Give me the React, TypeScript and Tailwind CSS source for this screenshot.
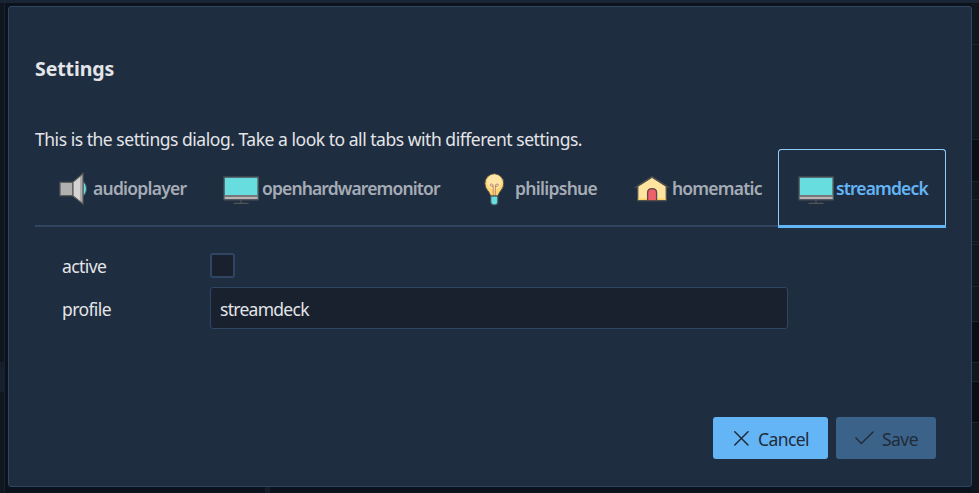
import type { ReactNode } from 'react';

function SpeakerIcon() {
  return (
    <svg width="40" height="40" viewBox="0 0 40 40" className="shrink-0">
      <path d="M30 12.5c4.5 2.5 4.5 12 0 14.5z" fill="#68dddf" stroke="#42545c" strokeWidth="1" />
      <rect x="7" y="13.3" width="13" height="13.4" fill="#b0b0b0" stroke="#555958" strokeWidth="1.2" />
      <path d="M20 13 30 4.5v30.5L20 27z" fill="#d4d2d3" />
      <path d="M27 7 30 4.5v30.5L27 32.5z" fill="#acacac" />
      <path d="M20 13 30 4.5v30.5L20 27z" fill="none" stroke="#555958" strokeWidth="1.2" />
    </svg>
  );
}

function MonitorIcon() {
  return (
    <svg width="40" height="40" viewBox="0 0 40 40" className="shrink-0">
      <rect x="2.1" y="8.1" width="34" height="22.6" fill="#68dddf" stroke="#50575a" strokeWidth="1.4" />
      <path d="M2.8 26h32.6v2H2.8z" fill="#77777a" />
      <path d="M2.8 28h32.6v2H2.8z" fill="#bab4b9" />
      <path d="M19 31v3M11.5 34.4h15" stroke="#515556" strokeWidth="1.2" fill="none" />
    </svg>
  );
}

function BulbIcon() {
  return (
    <svg width="40" height="40" viewBox="0 0 40 40" className="shrink-0">
      <path d="M15.8 27h7v6q0 3-3.5 3t-3.5-3z" fill="#68dddf" stroke="#465358" strokeWidth="1.1" />
      <path d="M19.3 4.8a9.4 9.4 0 0 0-9.4 9.6c0 6 4.2 7 5.7 12.4h7.4c1.5-5.4 5.7-6.4 5.7-12.4a9.4 9.4 0 0 0-9.4-9.6z" fill="#ffd573" stroke="#4d514f" strokeWidth="1" />
      <ellipse cx="19.3" cy="13" rx="7.3" ry="7.5" fill="#ffe5a6" />
      <path d="M18.2 26V17q0-2-1.6-2t-1.4 1.4q.2 1 3 1M20.4 26V17q0-2 1.6-2t1.4 1.4q-.2 1-3 1" fill="none" stroke="#c18b68" strokeWidth="1" />
    </svg>
  );
}

function HouseIcon() {
  return (
    <svg width="40" height="40" viewBox="0 0 40 40" className="shrink-0">
      <path d="M5.8 31.6V17.3L20 8.2l14.2 9.1v14.3z" fill="#ffe4a0" stroke="#50524e" strokeWidth="1.2" />
      <path d="M6.5 29.5h27V31h-27z" fill="#ffd166" />
      <path d="M2.8 18.8 20 7.8l17.2 11" fill="none" stroke="#50524e" strokeWidth="1.2" />
      <path d="M15.6 31.6v-8q0-4 4.5-4t4.5 4v8z" fill="#ef6168" stroke="#5c484a" strokeWidth="1.3" />
    </svg>
  );
}

function Tab({ width, icon, label, tracking, active }: { width: string; icon: ReactNode; label: string; tracking: string; active?: boolean }) {
  return (
    <div
      className={`flex h-[79px] shrink-0 items-center ${width} ${
        active ? 'rounded-t-[4px] border-b-3 border-[#64b5f6] pl-[19px] text-[#64b5f6] shadow-[inset_0_1px_0_#93cbf9,inset_1px_0_0_#93cbf9,inset_-1px_0_0_#93cbf9]' : 'pl-[18px] text-[#a5acb5]'
      }`}
    >
      <div className={`flex items-center ${active ? 'pt-[3px]' : ''}`}>
        {icon}
        <span className={`whitespace-nowrap pb-[2px] text-[17.5px] leading-6 font-semibold ${active ? '-ml-px' : ''} ${tracking}`}>{label}</span>
      </div>
    </div>
  );
}

function Backdrop() {
  return (
    <div className="flex h-full flex-col">
      <div className="h-[3px] bg-[#192534]" />
      <div className="flex flex-1 justify-between">
        <div className="flex w-[5px] flex-col border-r border-[#152232]">
          <div className="h-[359px] bg-[#10161f]" />
          <div className="h-[30px] bg-[#15202c]" />
          <div className="flex-1 bg-[#10171f]" />
        </div>
        <div className="flex flex-1 items-end bg-[#0c121b] pl-[260px]">
          <div className="h-[6px] w-[5px] bg-[#151c2b]" />
        </div>
        <div className="flex w-2 flex-col bg-[#0f161e]">
          <div className="h-[42px] border-b border-[#182430]" />
          <div className="h-[95px] border-b border-[#182430]" />
          <div className="h-[42px] border-b border-[#182430] bg-[#090e14]" />
          <div className="h-[18px] border-b border-[#182430]" />
          <div className="h-[42px] border-b border-[#182430]" />
          <div className="h-[3px] border-b border-[#182430]" />
          <div className="h-[42px] border-b border-[#182430]" />
          <div className="h-[35px] border-b border-[#182430]" />
          <div className="h-[41px] border-b border-[#182430] bg-[#090e14]" />
          <div className="h-[19px] border-b border-[#182430]" />
          <div className="h-[41px] border-b border-[#182430] bg-[#090e14]" />
        </div>
      </div>
    </div>
  );
}

export default function App() {
  return (
    <div className="relative h-[493px] w-[979px] overflow-hidden bg-[#0c121b] font-['Noto_Sans','Open_Sans',sans-serif] text-[17.5px] leading-6 text-[#e3e5e8]">
      <Backdrop />
      <div role="dialog" className="absolute top-[6px] left-[8px] flex h-[481px] w-[964px] flex-col rounded-[3px] border border-[#304562] bg-[#1f2d40] px-[26px]">
        <h1 className="mt-[50px] text-[19.5px] leading-6 font-bold tracking-[-0.1px]">Settings</h1>
        <p className="mt-[46px] whitespace-nowrap tracking-[-0.47px]">This is the settings dialog. Take a look to all tabs with different settings.</p>
        <div className="-mt-[2px] flex h-[79px] w-[911px] bg-[linear-gradient(#304562,#304562)] bg-[length:100%_2px] bg-[position:0_76px] bg-no-repeat">
          <Tab width="w-[169px]" icon={<SpeakerIcon />} label="audioplayer" tracking="tracking-[-0.75px]" />
          <Tab width="w-[253px]" icon={<MonitorIcon />} label="openhardwaremonitor" tracking="tracking-[-0.87px]" />
          <Tab width="w-[157px]" icon={<BulbIcon />} label="philipshue" tracking="tracking-[-0.7px]" />
          <Tab width="w-[164px]" icon={<HouseIcon />} label="homematic" tracking="tracking-[-0.8px]" />
          <Tab width="w-[168px]" icon={<MonitorIcon />} label="streamdeck" tracking="tracking-[-0.87px]" active />
        </div>
        <div className="mt-[25px] flex h-[25px] items-center pl-[27px]">
          <span className="w-[148px] tracking-[-0.6px]">active</span>
          <span className="size-[25px] rounded-[3px] border-2 border-[#304562] bg-[#19212f]" />
        </div>
        <div className="mt-[9px] flex h-[42px] items-center pl-[27px]">
          <span className="w-[148px] pt-px tracking-[-0.6px]">profile</span>
          <div className="flex h-[42px] w-[578px] items-center rounded-[3px] border border-[#304562] bg-[#19212f] pt-px pl-[9px] tracking-[-0.72px]">streamdeck</div>
        </div>
        <div className="mt-[88px] flex justify-end gap-2 pr-[9px] text-[#212b3a]">
          <button className="flex h-[42px] w-[115px] items-center rounded-[3px] bg-[#64b5f6] pl-[21px]">
            <svg width="15" height="15" viewBox="0 0 15 15"><path d="M.8.8 14 14M14 .8.8 14" stroke="currentColor" strokeWidth="1.5" strokeLinecap="round" /></svg>
            <span className="ml-[9px] pt-px tracking-[-0.6px]">Cancel</span>
          </button>
          <button disabled className="flex h-[42px] w-[100px] items-center rounded-[3px] bg-[#3b6289] pl-[19px]">
            <svg width="19" height="14" viewBox="0 0 19 14" fill="none"><path d="m1 7 5.4 5.5L18 1" stroke="currentColor" strokeWidth="1.5" strokeLinecap="round" strokeLinejoin="round" /></svg>
            <span className="ml-[8px] pt-px tracking-[-0.55px]">Save</span>
          </button>
        </div>
      </div>
    </div>
  );
}
